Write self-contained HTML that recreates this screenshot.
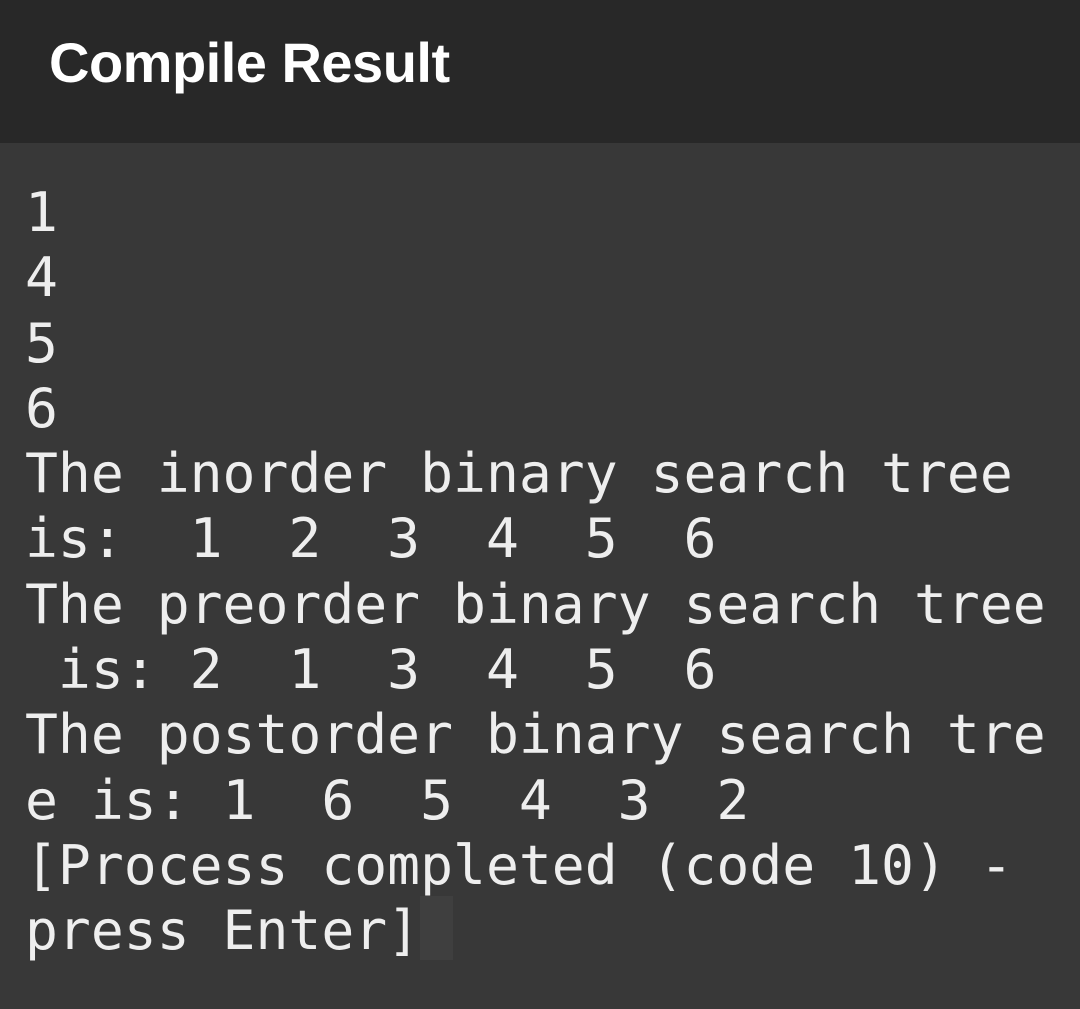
<!DOCTYPE html>
<html><head><meta charset="utf-8"><style>
html,body{margin:0;padding:0;}
body{width:1080px;height:1009px;background:#383838;overflow:hidden;position:relative;}
.hdr{position:absolute;left:0;top:0;width:1080px;height:143px;background:#282828;}
.title{position:absolute;left:49px;top:23px;font-family:"Liberation Sans",sans-serif;font-weight:bold;font-size:56px;line-height:80px;color:#fff;white-space:nowrap;letter-spacing:-0.5px;}
pre{position:absolute;left:25px;top:180px;margin:0;font-family:"DejaVu Sans Mono",monospace;font-size:54.7px;line-height:65.3px;color:#eeeeee;}
.cur{position:absolute;left:420px;top:896px;width:33px;height:64px;background:#3f3f3f;}
</style></head><body>
<div class="hdr"><div class="title">Compile Result</div></div>
<div class="cur"></div>
<pre>1
4
5
6
The inorder binary search tree
is:  1  2  3  4  5  6
The preorder binary search tree
 is: 2  1  3  4  5  6
The postorder binary search tre
e is: 1  6  5  4  3  2
[Process completed (code 10) -
press Enter]</pre>
</body></html>
